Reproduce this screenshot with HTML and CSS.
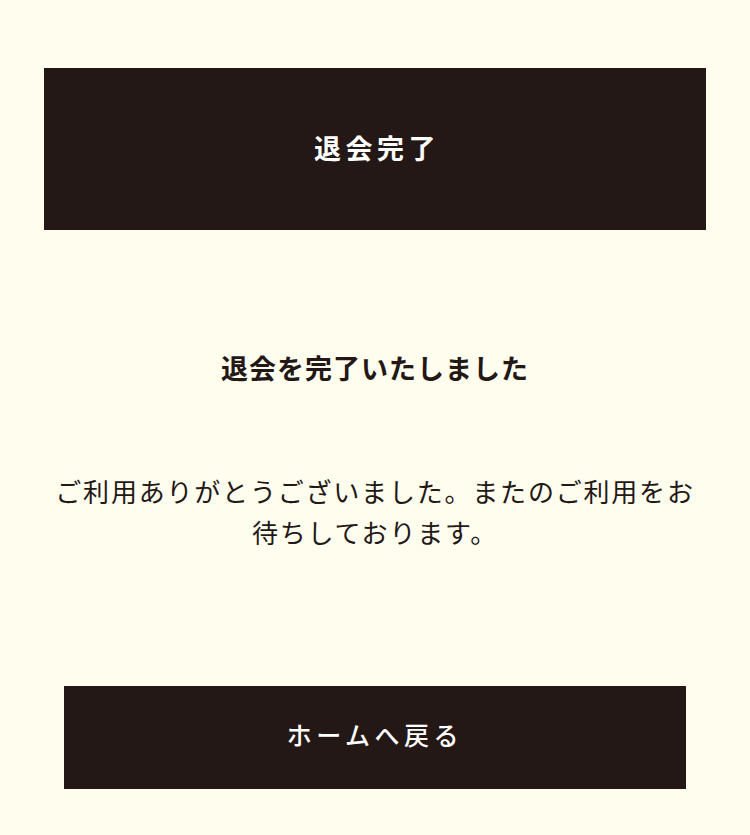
FILE: index.html
```html
<!DOCTYPE html>
<html lang="ja">
<head>
<meta charset="utf-8">
<title>退会完了</title>
<link rel="stylesheet" href="styles.css">
</head>
<body>
<main class="page">
  <header class="title-bar">
    <h1 class="title">退会完了</h1>
  </header>
  <h2 class="heading">退会を完了いたしました</h2>
  <p class="message">ご利用ありがとうございました。またのご利用をお待ちしております。</p>
  <a class="home-button" href="#">ホームへ戻る</a>
</main>
</body>
</html>
```
FILE: styles.css
```css
html, body {
  margin: 0;
  padding: 0;
  background: #fffdee;
}
body {
  font-family: "Noto Sans CJK JP", "Noto Sans", sans-serif;
  color: #231815;
}
.page {
  padding: 68px 44px 0;
  display: flex;
  flex-direction: column;
}
.title-bar {
  background: #231815;
  height: 162px;
  display: flex;
  align-items: center;
  justify-content: center;
}
.title {
  margin: 0 -4px 4px 0;
  color: #ffffff;
  font-size: 27px;
  font-weight: 700;
  letter-spacing: 4.5px;
  line-height: 1;
}
.heading {
  margin: 118px 0 0;
  text-align: center;
  font-size: 27px;
  font-weight: 700;
  letter-spacing: 1px;
  line-height: 40px;
}
.message {
  margin: 82px 0 0;
  text-align: center;
  font-size: 26px;
  font-weight: 400;
  letter-spacing: 1.8px;
  line-height: 41px;
}
.home-button {
  margin: 134px 20px 0;
  height: 103px;
  padding-bottom: 8px;
  box-sizing: border-box;
  background: #231815;
  color: #ffffff;
  text-decoration: none;
  display: flex;
  align-items: center;
  justify-content: center;
  font-size: 25px;
  font-weight: 500;
  letter-spacing: 4.5px;
}
```
